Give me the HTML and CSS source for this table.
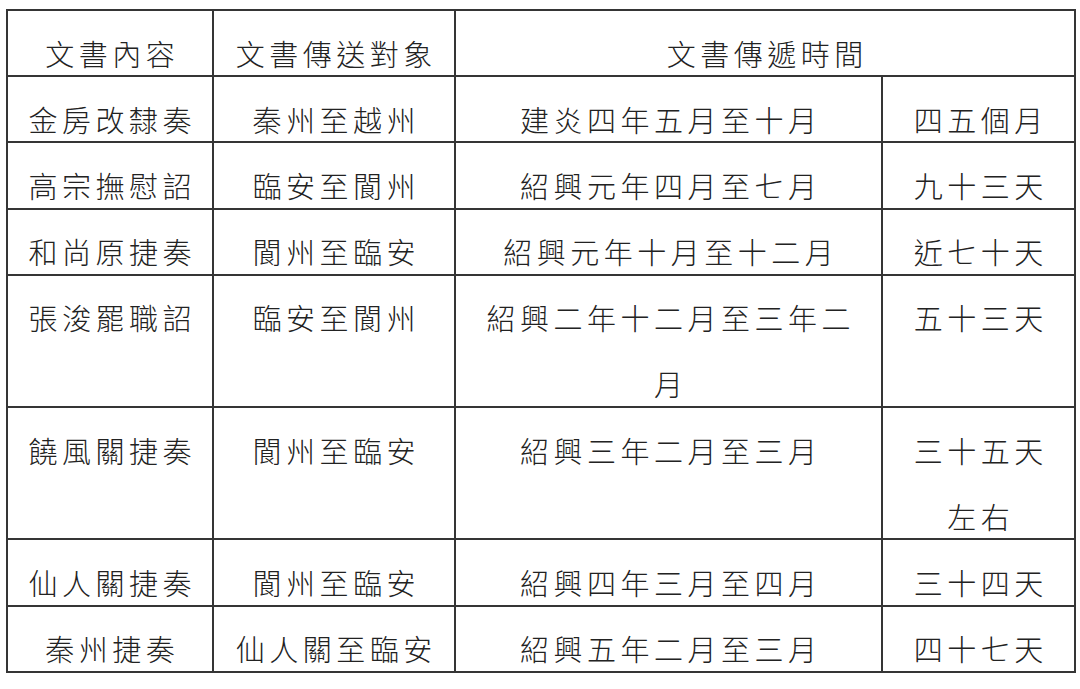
FILE: index.html
```html
<!DOCTYPE html>
<html lang="zh-Hant">
<head>
<meta charset="utf-8">
<link rel="stylesheet" href="styles.css">
</head>
<body>
<table class="doc-table">
  <colgroup>
    <col class="c1"><col class="c2"><col class="c3"><col class="c4">
  </colgroup>
  <tr>
    <td><div class="t">文書內容</div></td>
    <td><div class="t">文書傳送對象</div></td>
    <td colspan="2"><div class="t">文書傳遞時間</div></td>
  </tr>
  <tr>
    <td><div class="t">金房改隸奏</div></td>
    <td><div class="t">秦州至越州</div></td>
    <td class="wide"><div class="t">建炎四年五月至十月</div></td>
    <td><div class="t">四五個月</div></td>
  </tr>
  <tr>
    <td><div class="t">高宗撫慰詔</div></td>
    <td><div class="t">臨安至閬州</div></td>
    <td class="wide"><div class="t">紹興元年四月至七月</div></td>
    <td><div class="t">九十三天</div></td>
  </tr>
  <tr>
    <td><div class="t">和尚原捷奏</div></td>
    <td><div class="t">閬州至臨安</div></td>
    <td class="wide"><div class="t">紹興元年十月至十二月</div></td>
    <td><div class="t">近七十天</div></td>
  </tr>
  <tr>
    <td><div class="t">張浚罷職詔</div></td>
    <td><div class="t">臨安至閬州</div></td>
    <td class="wide"><div class="t">紹興二年十二月至三年二月</div></td>
    <td><div class="t">五十三天</div></td>
  </tr>
  <tr>
    <td><div class="t">饒風關捷奏</div></td>
    <td><div class="t">閬州至臨安</div></td>
    <td class="wide"><div class="t">紹興三年二月至三月</div></td>
    <td><div class="t">三十五天左右</div></td>
  </tr>
  <tr>
    <td><div class="t">仙人關捷奏</div></td>
    <td><div class="t">閬州至臨安</div></td>
    <td class="wide"><div class="t">紹興四年三月至四月</div></td>
    <td><div class="t">三十四天</div></td>
  </tr>
  <tr>
    <td><div class="t">秦州捷奏</div></td>
    <td><div class="t">仙人關至臨安</div></td>
    <td class="wide"><div class="t">紹興五年二月至三月</div></td>
    <td><div class="t">四十七天</div></td>
  </tr>
</table>
</body>
</html>
```
FILE: styles.css
```css
html, body {
  margin: 0;
  padding: 0;
  background: #ffffff;
}
body {
  padding: 9px 0 0 6px;
  font-family: "Noto Sans CJK TC", "Noto Sans CJK SC", sans-serif;
  font-weight: 300;
  color: #222222;
}
.doc-table {
  border-collapse: collapse;
  table-layout: fixed;
  width: 1070px;
}
.c1 { width: 206px; }
.c2 { width: 242px; }
.c3 { width: 427px; }
.c4 { width: 193px; }
.doc-table td {
  border: 2px solid #353535;
  padding: 0 12px;
  text-align: center;
  vertical-align: top;
  font-size: 29px;
  letter-spacing: 4.5px;
  line-height: 66.1px;
}
.doc-table td.wide {
  padding: 0 24px;
}
.t {
  margin-top: 8.5px;
  margin-bottom: -10.4px;
  padding-left: 4.5px;
}
```
